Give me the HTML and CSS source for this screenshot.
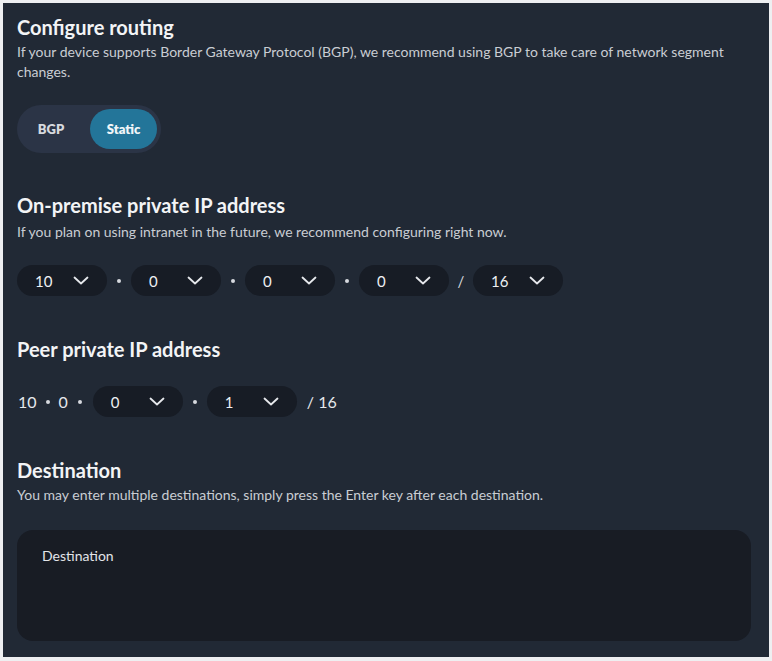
FILE: index.html
```html
<!DOCTYPE html>
<html>
<head>
<meta charset="utf-8">
<link rel="stylesheet" href="styles.css">
</head>
<body>
<div class="panel">
  <section class="sec sec-routing">
    <h2 class="title">Configure routing</h2>
    <p class="desc">If your device supports Border Gateway Protocol (BGP), we recommend using BGP to take care of network segment changes.</p>
    <div class="toggle">
      <span class="opt">BGP</span>
      <span class="opt active">Static</span>
    </div>
  </section>

  <section class="sec sec-onprem">
    <h2 class="title">On-premise private IP address</h2>
    <p class="desc">If you plan on using intranet in the future, we recommend configuring right now.</p>
    <div class="iprow">
      <div class="sel"><span>10</span><svg class="chev" viewBox="0 0 16 9"><path d="M1.5 1.5 L8 7.5 L14.5 1.5"/></svg></div>
      <span class="dot"></span>
      <div class="sel"><span>0</span><svg class="chev" viewBox="0 0 16 9"><path d="M1.5 1.5 L8 7.5 L14.5 1.5"/></svg></div>
      <span class="dot"></span>
      <div class="sel"><span>0</span><svg class="chev" viewBox="0 0 16 9"><path d="M1.5 1.5 L8 7.5 L14.5 1.5"/></svg></div>
      <span class="dot"></span>
      <div class="sel"><span>0</span><svg class="chev" viewBox="0 0 16 9"><path d="M1.5 1.5 L8 7.5 L14.5 1.5"/></svg></div>
      <span class="slash">/</span>
      <div class="sel"><span>16</span><svg class="chev" viewBox="0 0 16 9"><path d="M1.5 1.5 L8 7.5 L14.5 1.5"/></svg></div>
    </div>
  </section>

  <section class="sec sec-peer">
    <h2 class="title">Peer private IP address</h2>
    <div class="iprow peer">
      <span class="fixed first">10</span>
      <span class="dot sm"></span>
      <span class="fixed">0</span>
      <span class="dot sm2"></span>
      <div class="sel"><span>0</span><svg class="chev" viewBox="0 0 16 9"><path d="M1.5 1.5 L8 7.5 L14.5 1.5"/></svg></div>
      <span class="dot"></span>
      <div class="sel"><span>1</span><svg class="chev" viewBox="0 0 16 9"><path d="M1.5 1.5 L8 7.5 L14.5 1.5"/></svg></div>
      <span class="fixed slash2">/ 16</span>
    </div>
  </section>

  <section class="sec sec-dest">
    <h2 class="title">Destination</h2>
    <p class="desc">You may enter multiple destinations, simply press the Enter key after each destination.</p>
    <div class="area"><span class="area-label">Destination</span></div>
  </section>
</div>
</body>
</html>
```
FILE: styles.css
```css
* { box-sizing: border-box; }
html, body { margin: 0; padding: 0; }
body {
  background: #eeeff1;
  width: 772px;
  height: 661px;
  padding: 3px 3px 4px 3px;
  font-family: Lato, "Noto Sans", sans-serif;
}
.panel {
  width: 766px;
  height: 654px;
  background: #212935;
  padding: 12px 14px 0 14px;
  display: flex;
  flex-direction: column;
}
.sec { display: flex; flex-direction: column; }
.title {
  margin: 0;
  color: #f3f4f6;
  font-size: 20px;
  font-weight: 700;
  line-height: 24px;
}
.desc {
  margin: 3px 0 0 0;
  color: #c9cdd3;
  font-size: 14px;
  line-height: 20px;
}
.toggle {
  margin-top: 23px;
  width: 144px;
  height: 48px;
  border-radius: 24px;
  background: #2b3446;
  display: flex;
  align-items: center;
  padding: 4px;
}
.opt {
  color: #d6d9de;
  font-weight: 800;
  font-size: 13px;
  height: 40px;
  display: flex;
  align-items: center;
  justify-content: center;
  width: 60px;
}
.opt.active {
  width: 67px;
  margin-left: 9px;
  background: #237599;
  color: #f1f5f8;
  border-radius: 20px;
}
.sec-onprem { margin-top: 40px; }
.sec-onprem .desc { margin-top: 5px; }
.iprow {
  display: flex;
  align-items: center;
  margin-top: 23px;
}
.sel {
  width: 90px;
  height: 31px;
  border-radius: 16px;
  background: #171c25;
  display: flex;
  align-items: center;
  justify-content: space-between;
  padding: 0 18px 0 18px;
  color: #eef0f3;
  font-size: 15px;
}
.chev { width: 16px; height: 9px; }
.chev path { fill: none; stroke: #e6e8ec; stroke-width: 1.8; stroke-linecap: round; stroke-linejoin: round; }
.dot {
  width: 4px; height: 4px; border-radius: 50%;
  background: #d6d9de;
  margin: 0 10px;
}
.slash { color: #d6d9de; font-size: 15px; width: 24px; text-align: center; }
.sec-peer { margin-top: 41px; }
.iprow.peer { margin-top: 25px; }
.fixed { color: #e6e8ec; font-size: 16px; }
.fixed.first { margin-left: 1px; }
.dot.sm { margin: 0 9px; }
.dot.sm2 { margin: 0 11px 0 10px; }
.slash2 { margin-left: 10px; }
.sec-dest { margin-top: 41px; }
.area {
  margin-top: 25px;
  width: 734px;
  height: 111px;
  background: #181c24;
  border-radius: 16px;
  padding: 15px 25px;
}
.area-label { color: #e3e5e9; font-size: 14px; }
```
